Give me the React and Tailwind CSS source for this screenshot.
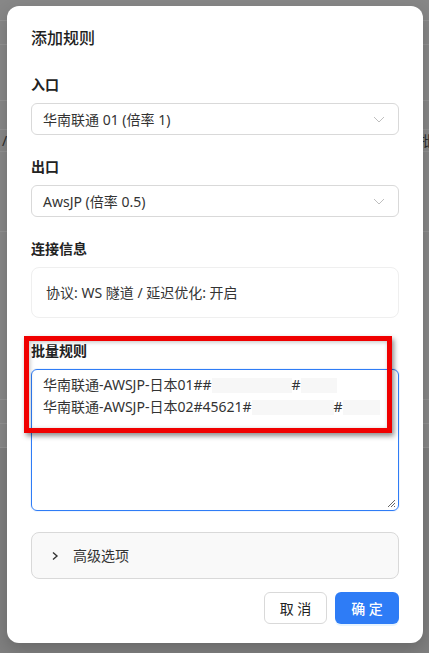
import React from 'react';

// Dimmed page rows behind the backdrop (only edges peek out)
const BG_ROWS = [
  { h: 21 },
  { h: 24 },
  { h: 56 },
  { h: 29 },
  { h: 22, left: '/', right: '批' },
  { h: 80 },
  { h: 168 },
  { h: 24 },
  { h: 24 }
];

function Chevron() {
  return (
    <svg width="12" height="7" viewBox="0 0 12 7" fill="none">
      <path d="M1 1l5 5 5-5" stroke="#bfbfbf" strokeWidth="1" />
    </svg>
  );
}

function Select({ value }) {
  return (
    <div className="h-8 flex items-center justify-between rounded-md border border-[#d9d9d9] bg-white pl-[11px] pr-[13px] text-[14px] text-[#333]">
      <span>{value}</span>
      <Chevron />
    </div>
  );
}

function Label({ children, className = '' }) {
  return (
    <div className={`leading-[22px] text-[14px] font-semibold text-[#222] mb-[7px] ${className}`}>
      {children}
    </div>
  );
}

function Blur({ w }) {
  return <span className="inline-block h-[15px] align-middle bg-[#f7f7f7]" style={{ width: w }} />;
}

export default function App() {
  return (
    <div className="relative w-[429px] h-[653px] overflow-hidden bg-[#7f7f7f] font-['Noto_Sans','Noto_Sans_CJK_SC',sans-serif]">
      {/* page behind the mask */}
      <div className="bg-[#878787]">
        {BG_ROWS.map((r, i) => (
          <div
            key={i}
            className="flex items-center justify-between border-b border-[#929292] px-[2px] text-[14px] text-[#2b2b2b]"
            style={{ height: r.h }}
          >
            <span>{r.left}</span>
            <span className="-mr-[6px]">{r.right}</span>
          </div>
        ))}
      </div>

      {/* modal */}
      <div className="absolute left-[7px] top-[6px] w-[416px] rounded-[12px] bg-white px-6 pt-5 pb-[19px] shadow-[0_6px_16px_rgba(0,0,0,0.18)]">
        <div className="text-[16px] leading-6 font-medium text-[#1f1f1f]">添加规则</div>

        <Label className="mt-6">入口</Label>
        <Select value="华南联通 01 (倍率 1)" />

        <Label className="mt-[21px]">出口</Label>
        <Select value="AwsJP (倍率 0.5)" />

        <Label className="mt-[21px]">连接信息</Label>
        <div className="rounded-lg border border-[#efefef] px-[14px] py-[14px] text-[14px] leading-[21px] text-[#333]">
          协议: WS 隧道 / 延迟优化: 开启
        </div>

        <Label className="mt-[22px]">批量规则</Label>
        <div className="relative h-[142px] rounded-md border border-[#2f7cf6] px-[11px] py-[4px] text-[14px] leading-[22px] text-[#333] shadow-[0_0_0_1px_rgba(47,124,246,0.08)]">
          <div className="flex items-center">
            <span>华南联通-AWSJP-日本01##</span>
            <Blur w={80} />
            <span>#</span>
            <Blur w={36} />
          </div>
          <div className="flex items-center">
            <span>华南联通-AWSJP-日本02#45621#</span>
            <Blur w={82} />
            <span>#</span>
            <Blur w={37} />
          </div>
          <svg className="absolute right-[2px] bottom-[2px]" width="9" height="9" viewBox="0 0 9 9">
            <path d="M8 1L1 8M8 4L4 8M8 7L7 8" stroke="#666" strokeWidth="1" />
          </svg>
        </div>

        <div className="mt-[21px] h-[47px] flex items-center gap-[14px] rounded-lg border border-[#d9d9d9] bg-[#f9f9f9] pl-[19px] text-[14px] text-[#333]">
          <svg width="8" height="10" viewBox="0 0 8 10" fill="none">
            <path d="M2 1.5l4 3.5-4 3.5" stroke="#333" strokeWidth="1.4" />
          </svg>
          <span>高级选项</span>
        </div>

        <div className="mt-[13px] flex justify-end gap-2">
          <button className="h-8 w-[63px] rounded-md border border-[#d9d9d9] bg-white text-[14px] text-[#222]">
            取 消
          </button>
          <button className="h-8 w-[64px] rounded-md bg-[#2e7cf6] text-[14px] font-medium text-white shadow-[0_2px_0_rgba(5,145,255,0.1)]">
            确 定
          </button>
        </div>
      </div>

      {/* annotation frame */}
      <div className="absolute left-[24px] top-[336px] w-[368px] h-[97px] border-[5px] border-[#f00000] shadow-[2px_3px_5px_rgba(0,0,0,0.45),inset_1px_1px_4px_rgba(0,0,0,0.25)]" />
    </div>
  );
}
